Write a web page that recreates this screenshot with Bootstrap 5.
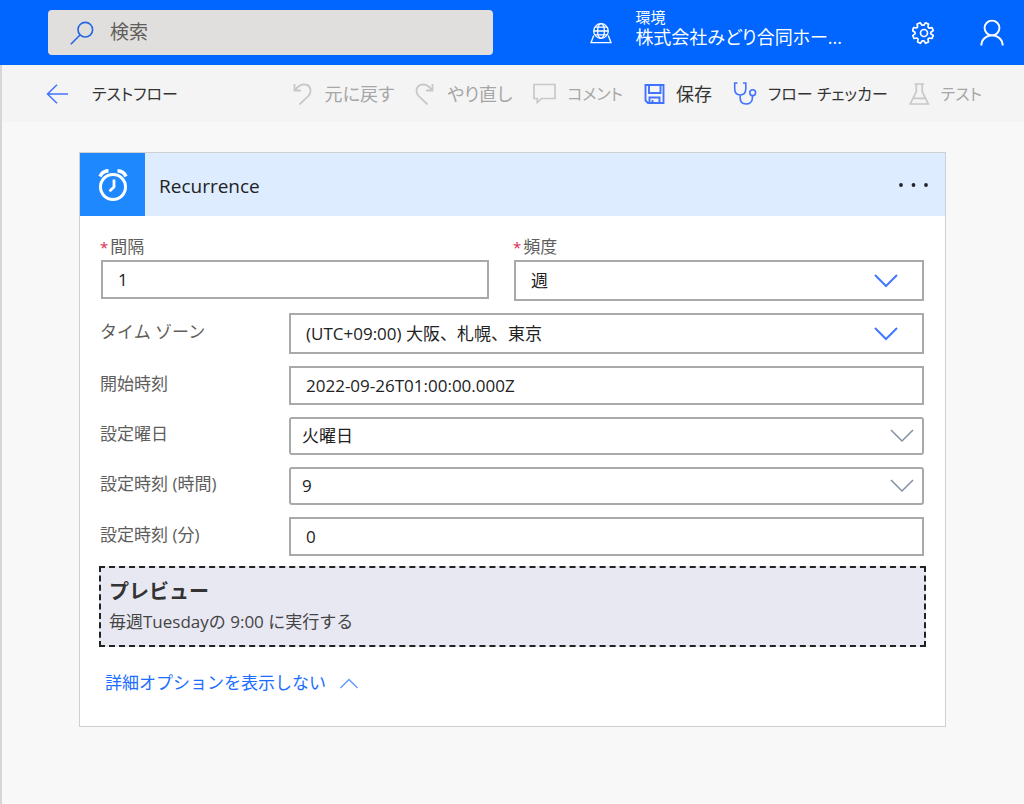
<!DOCTYPE html>
<html lang="ja">
<head>
<meta charset="utf-8">
<meta name="viewport" content="width=device-width, initial-scale=1">
<title>テストフロー</title>
<link href="https://cdn.jsdelivr.net/npm/bootstrap@5.3.0/dist/css/bootstrap.min.css" rel="stylesheet">
<style>
  body { font-family: "Open Sans", "Noto Sans CJK JP", sans-serif; background: #f8f8f8; color: #333; }
  svg { display: block; flex: none; fill: none; stroke: currentColor; }
  .btn { --bs-btn-border-width: 0; --bs-btn-padding-x: 0; --bs-btn-padding-y: 0; --bs-btn-border-radius: 0; white-space: nowrap; }
  .kana-tight, .kana-tight .btn { font-feature-settings: "palt"; }

  .top-bar { background: #0066ff; height: 65px; padding: 0 20px 0 48px; }
  .search-box { flex: 0 0 46.6%; height: 45px; background: #e1dfdd; border-radius: 4px; padding: 0 22px; gap: 16px; color: #2266e3; }
  .search-box input { font-size: 19px; color: #444; }
  .search-box input::placeholder { color: #605e5c; opacity: 1; }
  .env-picker { gap: 23px; margin-right: 70px; }
  .env-text { padding-bottom: 12px; }
  .env-caption { font-size: 15px; line-height: 20px; }
  .env-name { font-size: 18px; line-height: 20px; white-space: nowrap; }
  .account { margin-left: 44px; }

  .work-area { border-left: 2px solid #d6d6d6; min-height: calc(100vh - 65px); }
  .tool-bar { background: #f4f4f4; height: 57px; padding: 0 42px 0 44px; color: #333; }
  .flow-title { font-size: 16px; }
  .tool-bar .btn { --bs-btn-font-size: 18px; --bs-btn-line-height: 24px; --bs-btn-color: #333; --bs-btn-disabled-color: #a6a6a6; --bs-btn-disabled-opacity: 1; gap: 11px; }
  .tool-bar .btn.katakana { --bs-btn-font-size: 16px; }
  .tool-bar .btn:disabled svg { color: #c8c8c8; }
  .tool-list { gap: 21px; }
  .accent { color: #4273ff; }

  .canvas { padding: 30px 78px 77px 77px; }
  .step { --bs-card-border-radius: 0; --bs-card-border-color: #cfcfcf; --bs-card-inner-border-radius: 0; }
  .step-head { background: #deecff; height: 63px; padding-right: 16px; color: #222; }
  .step-icon { background: #1e88ff; width: 65px; color: #fff; }
  .step-title { font-size: 19px; margin-left: 14px; padding-top: 3px; }
  .step-body { padding: 18px 21px 30px 20px; font-size: 17px; }
  .pair { display: grid; grid-template-columns: 388fr 410fr; gap: 25px; padding-left: 1px; }
  .pair label { display: block; line-height: 26px; font-size: 17px; color: #605e5c; }
  .req { color: #e0244c; font-size: 15px; margin: 0 2px 0 -1px; }
  .line { display: grid; grid-template-columns: 189px 1fr; align-items: center; margin-top: 12px; }
  .line label { color: #605e5c; padding-bottom: 4px; line-height: 24px; }
  .field { border: 2px solid #a9a9a9; border-radius: 0; font-size: 17px; line-height: 24px; padding: 0 15px; color: #222; height: 39px; background-color: #fff; }
  select.field { padding-right: 48px; background-position: right 24px center; background-size: 24px 14px; }
  select.tall { height: 41px; background-image: url("data:image/svg+xml,%3Csvg xmlns='http://www.w3.org/2000/svg' viewBox='0 0 24 14'%3E%3Cpath d='M1 1l11 11L23 1' fill='none' stroke='%234278ff' stroke-width='2'/%3E%3C/svg%3E"); }
  select.combo { height: 38px; border-radius: 3px; padding-left: 11px; background-position: right 8px center; background-image: url("data:image/svg+xml,%3Csvg xmlns='http://www.w3.org/2000/svg' viewBox='0 0 24 14'%3E%3Cpath d='M1 1l11 11L23 1' fill='none' stroke='%238090a0' stroke-width='1.5'/%3E%3C/svg%3E"); }
  .preview { background: #e8e8f3; border: 2px dashed #222; margin: 10px -2px 0 -1px; padding: 9px 8px 8px; }
  .preview h2 { font-size: 20px; line-height: 30px; margin: 0; font-weight: 600; }
  .preview p { line-height: 30px; margin: 0; color: #444; }
  .more { color: #1a6dff; gap: 14px; margin: 23px 0 0 5px; line-height: 26px; }
</style>
</head>
<body>
<header class="top-bar d-flex align-items-center text-white">
  <label class="search-box d-flex align-items-center">
    <svg width="24" height="24" viewBox="0 0 24 24" stroke-width="1.600"><circle cx="15.300" cy="8.700" r="7.300"/><path d="M10 14L.8 23.200"/></svg>
    <input type="search" class="form-control-plaintext p-0" placeholder="検索" aria-label="検索">
  </label>
  <div class="env-picker d-flex align-items-center ms-auto">
    <svg width="22" height="22" viewBox="0 0 22 22" stroke-width="1.300"><circle cx="11" cy="9" r="7.300"/><ellipse cx="11" cy="9" rx="3.400" ry="7.300"/><path d="M3.800 9h14.400M5 5.200h12M5 12.800h12M3.700 13.500L1 20.700h20l-2.700-7.200"/></svg>
    <div class="env-text">
      <div class="env-caption">環境</div>
      <div class="env-name kana-tight">株式会社みどり合同ホー...</div>
    </div>
  </div>
  <button class="btn text-white" type="button" aria-label="設定">
    <svg width="24" height="24" viewBox="0 0 24 24" stroke-width="1.700" stroke-linejoin="round"><circle cx="12" cy="12" r="3.500"/><path d="M10 4.200L8.200 1.700 5.100 3l.5 3-1 1-3-.5L.6 9.700 3 11.300v1.600L.7 14.600 2 17.500l2.900-.5 1.200 1.200-.5 2.800 2.900 1.300 1.700-2.500h1.700l1.700 2.500 2.900-1.300-.5-2.900 1.100-1.100 2.900.5 1.300-3-2.500-1.700v-1.600l2.500-1.600-1.300-3-2.900.5-1.100-1.200.5-2.800-3-1.300-1.700 2.400z"/></svg>
  </button>
  <button class="btn text-white account" type="button" aria-label="アカウント">
    <svg width="24" height="27" viewBox="0 0 24 27" stroke-width="1.900"><circle cx="12" cy="9" r="7.400"/><path d="M1.300 26.500C1.300 20.500 6 16.400 12 16.400s10.700 4.100 10.700 10.100"/></svg>
  </button>
</header>

<main class="work-area">
  <div class="tool-bar d-flex align-items-center justify-content-between">
    <div class="d-flex align-items-center gap-4">
      <a href="#" class="accent" aria-label="戻る"><svg width="22" height="20" viewBox="0 0 22 20" stroke-width="1.500"><path d="M11 .8L1.500 10l9.500 9.200M1.500 10H22"/></svg></a>
      <span class="flow-title kana-tight">テストフロー</span>
    </div>
    <div class="tool-list kana-tight d-flex">
      <button class="btn d-flex align-items-center" type="button" disabled><svg width="21" height="22" viewBox="0 0 21 22" stroke-width="1.800"><path d="M1.500 1v6.500H8M2 7C5 3 8 1.500 11 1.500c4 0 6.500 2.500 6.500 6.500 0 2-.8 3.600-2 4.800L6.500 21.500"/></svg>元に戻す</button>
      <button class="btn d-flex align-items-center" type="button" disabled><svg width="21" height="22" viewBox="0 0 21 22" stroke-width="1.800"><path d="M17.500 1v6.500H11M17 7C14 3 11 1.500 8 1.500 4 1.500 1.500 4 1.500 8c0 2 .8 3.600 2 4.800L12.500 21.500"/></svg>やり直し</button>
      <button class="btn katakana d-flex align-items-center" type="button" disabled><svg width="23" height="21" viewBox="0 0 23 21" stroke-width="1.700"><path d="M1 1.500h21v14H8.500L4.300 19.500v-4H1z"/></svg>コメント</button>
      <button class="btn d-flex align-items-center" type="button"><svg class="accent" width="21" height="20" viewBox="0 0 21 20" stroke-width="1.900"><path d="M1.500 1h18v18H4l-2.500-2.500zM5 1v8h11.500V1M5.500 19v-5.500h10V19M8.500 19v-3"/></svg>保存</button>
      <button class="btn katakana d-flex align-items-center" type="button"><svg class="accent" width="24" height="23" viewBox="0 0 24 23" stroke-width="1.600"><path d="M4.500 1H1.700v5.500c0 4 2 6.500 5.500 6.500s5.600-2.500 5.600-6.500V1H10M7.200 13v3c0 3.500 2 6 5.800 6s6.400-2.400 6.400-6v-2.500"/><circle cx="19.700" cy="10.700" r="2.900"/></svg>フロー チェッカー</button>
      <button class="btn katakana d-flex align-items-center" type="button" disabled><svg width="21" height="22" viewBox="0 0 21 22" stroke-width="1.700"><path d="M5.500 1h9.500M7.300 1v7.500L1.200 21h18.100L13.200 8.500V1M4 15.300h12.500"/></svg>テスト</button>
    </div>
  </div>

  <div class="canvas">
    <section class="card step">
      <div class="step-head d-flex">
        <div class="step-icon d-flex align-items-center justify-content-center">
          <svg width="30" height="32" viewBox="0 0 30 32" stroke-width="3"><circle cx="15" cy="18" r="12.500"/><path d="M16 10.500v7.500l-4.500 4.200" stroke-width="2.800"/><path d="M2 7.500C3.500 4 6.500 2 10.500 1.800M28 7.500C26.500 4 23.500 2 19.500 1.800" stroke-width="3.400"/></svg>
        </div>
        <h1 class="step-title fw-normal mb-0 align-self-center">Recurrence</h1>
        <button class="btn ms-auto align-self-center" type="button" aria-label="メニュー"><svg width="30" height="4" viewBox="0 0 30 4" style="fill:currentColor;stroke:none"><circle cx="2" cy="2" r="1.900"/><circle cx="14.500" cy="2" r="1.900"/><circle cx="27" cy="2" r="1.900"/></svg></button>
      </div>
      <form class="step-body">
        <div class="pair">
          <div><label for="interval"><span class="req">*</span>間隔</label>
            <input id="interval" class="form-control field" value="1"></div>
          <div><label for="freq"><span class="req">*</span>頻度</label>
            <select id="freq" class="form-select field tall"><option>週</option></select></div>
        </div>
        <div class="line"><label for="tz">タイム ゾーン</label>
          <select id="tz" class="form-select field tall"><option>(UTC+09:00) 大阪、札幌、東京</option></select></div>
        <div class="line"><label for="start">開始時刻</label>
          <input id="start" class="form-control field" value="2022-09-26T01:00:00.000Z"></div>
        <div class="line"><label for="days">設定曜日</label>
          <select id="days" class="form-select field combo"><option>火曜日</option></select></div>
        <div class="line"><label for="hours">設定時刻 (時間)</label>
          <select id="hours" class="form-select field combo"><option>9</option></select></div>
        <div class="line"><label for="mins">設定時刻 (分)</label>
          <input id="mins" class="form-control field" value="0"></div>
        <div class="preview">
          <h2>プレビュー</h2>
          <p>毎週Tuesdayの 9:00 に実行する</p>
        </div>
        <a href="#" class="more d-inline-flex align-items-center text-decoration-none">詳細オプションを表示しない
          <svg width="18" height="11" viewBox="0 0 18 11" stroke-width="1.300" opacity=".7"><path d="M.5 10L9 1.500l8.500 8.500"/></svg></a>
      </form>
    </section>
  </div>
</main>
<script src="https://cdn.jsdelivr.net/npm/bootstrap@5.3.0/dist/js/bootstrap.bundle.min.js"></script>
</body>
</html>
